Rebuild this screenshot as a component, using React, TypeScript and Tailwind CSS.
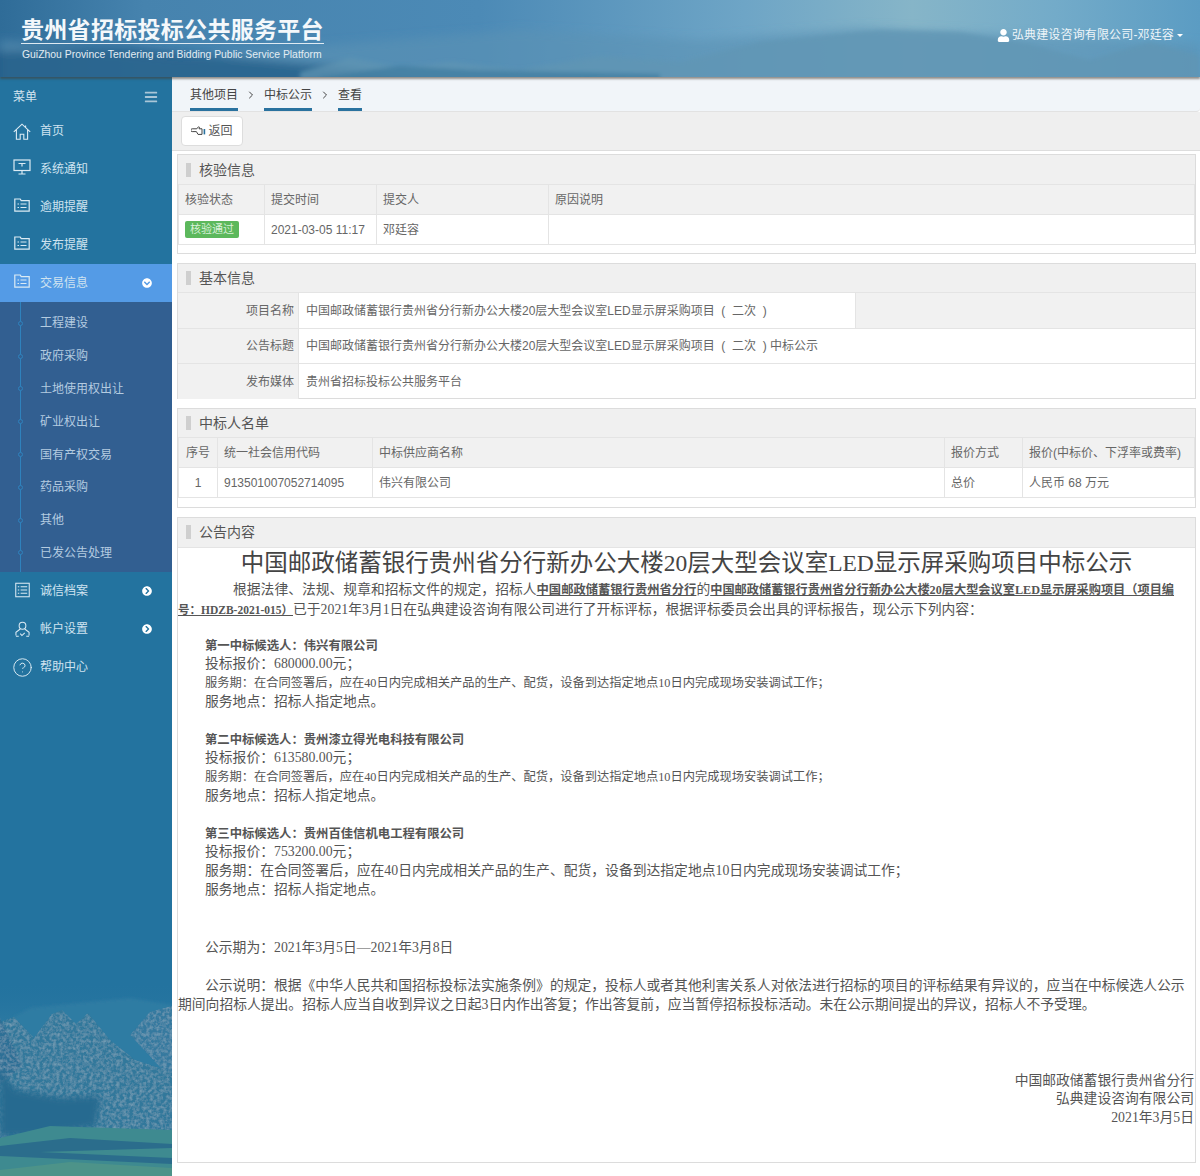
import { ChevronRight, CircleHelp } from "lucide-react";
import { FaBars, FaChevronCircleDown, FaChevronCircleRight, FaUser } from "react-icons/fa";

const sans = "font-['Liberation_Sans','Noto_Sans_CJK_SC',sans-serif]";
const serif = "font-['Liberation_Serif','Noto_Sans_CJK_SC',serif]";

const thClass = "border-r border-[#e4e4e4] px-[6px] text-left font-normal last:border-r-0";
const tdClass = "border-r border-[#e4e4e4] px-[6px] last:border-r-0";
const rowClass = "h-[30px] border-b border-[#e4e4e4]";
const headRowClass = "h-[30px] border-y border-[#e4e4e4] bg-[#f1f1f1]";
const labelClass = "flex w-[121px] shrink-0 items-center justify-end border-r border-[#e4e4e4] bg-[#f1f1f1] pr-[4px]";
const lineClass = "h-[18.8px] whitespace-nowrap";
const smallLine = "text-[12.25px]";
const boldLine = "text-[12.35px] font-bold";
const crumbClass = "flex h-[34px] items-center border-b-[3px] border-[#2a729f] pt-[4px]";

const subMenus = ["工程建设", "政府采购", "土地使用权出让", "矿业权出让", "国有产权交易", "药品采购", "其他", "已发公告处理"];

function HomeIcon() {
  return (
    <svg viewBox="0 0 18 17" className="h-[17px] w-[18px]" fill="none" stroke="currentColor" strokeWidth="1.1">
      <path d="M0.8 8.8 9 1.2l8.2 7.6M3.4 6.8v9.4h3.8v-5h3.6v5h3.8V6.8M12.6 2.6v2" />
    </svg>
  );
}

function ScreenIcon() {
  return (
    <svg viewBox="0 0 18 16" className="-mt-[4px] h-[16px] w-[18px]" fill="none" stroke="currentColor" strokeWidth="1.2">
      <rect x="1" y="1" width="16" height="10.5" />
      <path d="M5.5 4.5h7M9 4.5v3M9 11.5V15M5.5 15h7" />
    </svg>
  );
}

function ListIcon() {
  return (
    <svg viewBox="0 0 16 14" className="-mt-[4px] h-[14px] w-[16px]" fill="none" stroke="currentColor" strokeWidth="1.2">
      <path d="M0.8 13.2V1h5.4l1 1.6h8v10.6z" />
      <path d="M3.5 6h1.5M6.5 6h6M3.5 9.5h1.5M6.5 9.5h6" />
    </svg>
  );
}

function LedgerIcon() {
  return (
    <svg viewBox="0 0 16 16" className="-mt-[3px] h-[16px] w-[15px]" fill="none" stroke="currentColor" strokeWidth="1.1">
      <rect x="0.8" y="0.8" width="14.4" height="14.4" />
      <path d="M3 4.5h1.5M6 4.5h7M3 8h1.5M6 8h7M3 11.5h1.5M6 11.5h7" />
    </svg>
  );
}

function AccountIcon() {
  return (
    <svg viewBox="0 0 16 17" className="h-[17px] w-[15px]" fill="none" stroke="currentColor" strokeWidth="1.1">
      <ellipse cx="8" cy="4.5" rx="3.6" ry="3.8" />
      <path d="M5.6 8 1 11.5V15M10.4 8 15 11.5V15M1 15.8h3M12 15.8h3M5.6 13l1.8 2 3-3" />
    </svg>
  );
}

function BackIcon() {
  return (
    <svg viewBox="0 0 15 11" className="mr-[2px] h-[11px] w-[15px]" fill="none" stroke="#444" strokeWidth="1">
      <path d="M1.2 2.8h4.6L7.4.8l1.2.6-.6 1.4h3v5.6H7L5.4 5.6H1.2a1.4 1.4 0 0 1 0-2.8z" />
      <rect x="12.6" y="3" width="1.6" height="5.4" fill="#2a729f" stroke="none" />
    </svg>
  );
}

function MenuRow({ icon, label, arrow, active }: { icon: React.ReactNode; label: string; arrow?: "down" | "right"; active?: boolean }) {
  return (
    <div className={`flex h-[38px] items-center text-xs text-[#cfe3f0] ${active ? "bg-[#549be6]" : ""}`}>
      <span className="flex w-[40px] shrink-0 justify-center pl-[4px] text-[#dcebf4]">{icon}</span>
      <span className="flex-1">{label}</span>
      {arrow === "down" && <FaChevronCircleDown className="mr-[20px] h-[10px] w-[10px] text-white" />}
      {arrow === "right" && <FaChevronCircleRight className="mr-[20px] h-[10px] w-[10px] text-white" />}
    </div>
  );
}

function PanelTitle({ title, size = "h-[28px]" }: { title: string; size?: string }) {
  return (
    <div className={`flex items-center bg-[#f0f0f0] pl-[8px] text-sm text-[#555] ${size}`}>
      <span className="mr-[8px] h-[14px] w-[5px] bg-[#cfcfcf]" />
      {title}
    </div>
  );
}

function HeaderArt() {
  return (
    <svg viewBox="0 0 1200 77" preserveAspectRatio="none" className="absolute inset-0 h-full w-full">
      <defs>
        <linearGradient id="sky" x1="0" x2="1" y1="0" y2="0">
          <stop offset="0" stopColor="#2f6c98" />
          <stop offset="0.12" stopColor="#4683ae" />
          <stop offset="0.4" stopColor="#4c8ab6" />
          <stop offset="0.62" stopColor="#6ea5c6" />
          <stop offset="0.76" stopColor="#86b5c8" />
          <stop offset="0.88" stopColor="#73abc9" />
          <stop offset="1" stopColor="#5b9cc3" />
        </linearGradient>
        <filter id="soft" x="-5%" y="-40%" width="110%" height="180%">
          <feGaussianBlur stdDeviation="5" />
        </filter>
        <filter id="softer" x="-5%" y="-40%" width="110%" height="180%">
          <feGaussianBlur stdDeviation="2" />
        </filter>
      </defs>
      <rect width="1200" height="77" fill="url(#sky)" />
      <g filter="url(#soft)">
        <path d="M0 40 L180 58 L340 44 L520 30 L700 40 L860 28 L1000 34 L1200 44 V90 H0Z" fill="#5b93b4" opacity="0.6" />
        <path d="M-20 52 L130 48 L330 66 L500 90 H-20Z" fill="#1f5a85" opacity="0.75" />
      </g>
      <g filter="url(#softer)">
        <path d="M300 72 L350 58 L400 68 L450 62 L520 70 L600 56 L680 62 L760 42 L880 30 L960 32 L1030 44 L1090 60 L1150 42 L1200 56 V80 H300Z" fill="#5f95b4" opacity="0.7" />
        <path d="M320 77 L400 66 L470 70 L560 72 L660 74 V80 H320Z" fill="#3f7b9f" opacity="0.7" />
      </g>
    </svg>
  );
}

function SidebarArt() {
  return (
    <svg viewBox="0 0 172 276" preserveAspectRatio="none" className="absolute bottom-0 left-0 h-[276px] w-[172px]">
      <defs>
        <filter id="rock" x="0" y="0" width="100%" height="100%">
          <feTurbulence type="fractalNoise" baseFrequency="0.3" numOctaves="3" seed="4" result="noise" />
          <feColorMatrix in="noise" type="matrix" values="0 0 0 0 0.42  0 0 0 0 0.58  0 0 0 0 0.66  0 0 0 0.7 -0.26" result="speck" />
          <feComposite in="speck" in2="SourceAlpha" operator="in" result="clip" />
          <feMerge>
            <feMergeNode in="SourceGraphic" />
            <feMergeNode in="clip" />
          </feMerge>
        </filter>
        <filter id="haze">
          <feGaussianBlur stdDeviation="1.5" />
        </filter>
        <filter id="edge">
          <feGaussianBlur stdDeviation="3" />
        </filter>
        <linearGradient id="fade" x1="0" x2="0" y1="0" y2="1">
          <stop offset="0" stopColor="#23739f" stopOpacity="0" />
          <stop offset="1" stopColor="#2f7ba3" />
        </linearGradient>
      </defs>
      <rect y="80" width="172" height="50" fill="url(#fade)" />
      <path d="M0 125 L30 108 L70 104 L110 100 L130 98 L172 105 V276 H0Z" fill="#2f7ba3" filter="url(#haze)" />
      <g filter="url(#rock)">
        <path d="M172 106 L150 112 L130 135 L172 180Z" fill="#35799f" />
        <path d="M0 122 L14 117 L34 138 L52 114 L62 110 L76 124 L88 113 L110 140 L135 160 L172 172 V240 H0Z" fill="#32789b" />
        <path d="M0 118 L22 165 L0 185Z" fill="#2e7096" />
      </g>
      <path d="M0 170 L16 190 L60 198 L100 196 L96 226 L40 236 L0 236Z" fill="#256a90" filter="url(#edge)" />
      <path d="M0 238 L50 226 L172 230 V276 H0Z" fill="#3e8a90" />
      <path d="M0 246 L70 238 L172 244 V248 L40 252 L172 258 V264 L0 256Z" fill="#2b6d8c" />
      <path d="M0 270 L70 262 L172 268 V276 H0Z" fill="#4d9389" />
    </svg>
  );
}

export default function App() {
  return (
    <div className={`flex h-[1176px] w-[1200px] flex-col overflow-hidden bg-white text-xs text-[#666] ${sans}`}>
      <header className="relative z-10 h-[77px] shrink-0 shadow-[0_2px_2px_rgba(70,60,50,0.55)]">
        <HeaderArt />
        <div className="relative flex items-start justify-between">
          <div className="ml-[21px] mt-[17px] w-[303px]">
            <div className="h-[27px] whitespace-nowrap border-b border-[#dfeaf2] text-[23px] font-bold leading-[26px] tracking-[0.3px] text-[#f4f8fb]">贵州省招标投标公共服务平台</div>
            <div className="mt-[4px] whitespace-nowrap pl-px text-[10.4px] text-[#e3edf3]">GuiZhou Province Tendering and Bidding Public Service Platform</div>
          </div>
          <div className="mr-[17px] mt-[27px] flex items-center text-xs tracking-[0.15px] text-[#eef5f9]">
            <FaUser className="mr-[2px] h-[13px] w-[13px] text-white" />
            弘典建设咨询有限公司-邓廷容
            <span className="ml-[3px] h-0 w-0 border-x-[3px] border-t-[3px] border-x-transparent border-t-white" />
          </div>
        </div>
      </header>

      <div className="flex min-h-0 flex-1">
        <aside className="relative w-[172px] shrink-0 bg-[#23739f]">
          <SidebarArt />
          <div className="relative">
            <div className="flex h-[35px] items-center justify-between pl-[13px] pr-[14px] pt-[4px] text-xs text-[#d4e5f0]">
              菜单
              <FaBars className="h-[14px] w-[14px] text-[#a9c6d8]" />
            </div>
            <MenuRow icon={<HomeIcon />} label="首页" />
            <MenuRow icon={<ScreenIcon />} label="系统通知" />
            <MenuRow icon={<ListIcon />} label="逾期提醒" />
            <MenuRow icon={<ListIcon />} label="发布提醒" />
            <MenuRow icon={<ListIcon />} label="交易信息" arrow="down" active />
            <div className="relative bg-[#325f91] pb-[3px] pt-[5px]">
              <span className="absolute inset-y-0 left-[20px] w-px bg-[#2f82bd]" />
              {subMenus.map((name) => (
                <div key={name} className="relative flex h-[32.8px] items-center pl-[40px] text-xs text-[#b4cbe0]">
                  <span className="absolute left-[18px] h-[5px] w-[5px] rounded-full border border-[#2f82bd] bg-[#325f91]" />
                  {name}
                </div>
              ))}
            </div>
            <MenuRow icon={<LedgerIcon />} label="诚信档案" arrow="right" />
            <MenuRow icon={<AccountIcon />} label="帐户设置" arrow="right" />
            <MenuRow icon={<CircleHelp className="h-[21px] w-[21px]" strokeWidth={1.1} />} label="帮助中心" />
          </div>
        </aside>

        <main className="flex min-w-0 flex-1 flex-col">
          <div className="flex h-[35px] shrink-0 items-start gap-[7px] rounded-br border-b border-[#e2e2e2] bg-[#f1f5f9] pl-[18px] text-xs text-[#444]">
            <span className={crumbClass}>其他项目</span>
            <ChevronRight className="mt-[12px] h-[12px] w-[12px] text-[#444]" />
            <span className={crumbClass}>中标公示</span>
            <ChevronRight className="mt-[12px] h-[12px] w-[12px] text-[#444]" />
            <span className={crumbClass}>查看</span>
          </div>
          <div className="h-[39px] shrink-0 border-b border-[#ddd] bg-[#efefef] pl-[9px] pt-[4px]">
            <button className="flex h-[30px] w-[62px] items-center justify-center rounded border border-[#ddd] bg-white text-xs text-[#555]">
              <BackIcon />
              返回
            </button>
          </div>

          <div className="flex flex-1 flex-col gap-[9px] pb-[13px] pl-[5px] pr-[4px] pt-[3px]">
            <section className="h-[100px] border border-[#dcdcdc]">
              <PanelTitle title="核验信息" size="h-[29px]" />
              <table className="w-full table-fixed border-collapse border-x border-[#e4e4e4]">
                <thead>
                  <tr className={headRowClass}>
                    <th className={`${thClass} w-[86px]`}>核验状态</th>
                    <th className={`${thClass} w-[112px]`}>提交时间</th>
                    <th className={`${thClass} w-[172px]`}>提交人</th>
                    <th className={thClass}>原因说明</th>
                  </tr>
                </thead>
                <tbody>
                  <tr className={rowClass}>
                    <td className={tdClass}>
                      <span className="inline-block h-[17px] w-[54px] rounded-[2px] bg-[#5cb85c] text-center text-[11px] leading-[17px] text-[#d8f0d8]">核验通过</span>
                    </td>
                    <td className={tdClass}>2021-03-05 11:17</td>
                    <td className={tdClass}>邓廷容</td>
                    <td className={tdClass} />
                  </tr>
                </tbody>
              </table>
            </section>

            <section className="h-[136px] border border-[#dcdcdc]">
              <PanelTitle title="基本信息" />
              <div className="flex h-[36px] border-t border-[#e4e4e4] bg-[#f1f1f1]">
                <div className={labelClass}>项目名称</div>
                <div className="flex w-[557px] items-center whitespace-pre border-r border-[#e4e4e4] bg-white pl-[7px]">中国邮政储蓄银行贵州省分行新办公大楼20层大型会议室LED显示屏采购项目  (  二次  )</div>
              </div>
              <div className="flex h-[35px] border-t border-[#e4e4e4]">
                <div className={labelClass}>公告标题</div>
                <div className="flex flex-1 items-center whitespace-pre pl-[7px]">中国邮政储蓄银行贵州省分行新办公大楼20层大型会议室LED显示屏采购项目  (  二次  ) 中标公示</div>
              </div>
              <div className="flex h-[36px] border-t border-[#e4e4e4]">
                <div className={labelClass}>发布媒体</div>
                <div className="flex flex-1 items-center pl-[7px]">贵州省招标投标公共服务平台</div>
              </div>
            </section>

            <section className="h-[100px] border border-[#dcdcdc]">
              <PanelTitle title="中标人名单" />
              <table className="w-full table-fixed border-collapse border-x border-[#e4e4e4]">
                <thead>
                  <tr className={headRowClass}>
                    <th className={`${thClass} w-[39px] !px-0 !text-center`}>序号</th>
                    <th className={`${thClass} w-[155px]`}>统一社会信用代码</th>
                    <th className={`${thClass} w-[572px]`}>中标供应商名称</th>
                    <th className={`${thClass} w-[78px]`}>报价方式</th>
                    <th className={thClass}>报价(中标价、下浮率或费率)</th>
                  </tr>
                </thead>
                <tbody>
                  <tr className={rowClass}>
                    <td className={`${tdClass} text-center`}>1</td>
                    <td className={tdClass}>913501007052714095</td>
                    <td className={tdClass}>伟兴有限公司</td>
                    <td className={tdClass}>总价</td>
                    <td className={tdClass}>人民币 68 万元</td>
                  </tr>
                </tbody>
              </table>
            </section>

            <section className="flex-1 border border-[#dcdcdc]">
              <PanelTitle title="公告内容" size="h-[29px] pb-[1px]" />
              <div className={`border-t border-[#e4e4e4] text-[13.8px] text-[#555] ${serif}`}>
                <div className="h-[30px] whitespace-nowrap text-center text-[23.5px] leading-[30px] text-[#444]">中国邮政储蓄银行贵州省分行新办公大楼20层大型会议室LED显示屏采购项目中标公示</div>
                <div className={`${lineClass} mt-[3px] pl-[55px] leading-[18.8px]`}>
                  根据法律、法规、规章和招标文件的规定，招标人
                  <span className="text-[12.3px] font-bold underline">中国邮政储蓄银行贵州省分行</span>的
                  <span className="text-[12.2px] font-bold underline">中国邮政储蓄银行贵州省分行新办公大楼20层大型会议室LED显示屏采购项目（项目编</span>
                </div>
                <div className={`${lineClass} mt-[1px] leading-[18.8px]`}>
                  <span className="text-[11.5px] font-bold underline">号：HDZB-2021-015）</span>已于2021年3月1日在弘典建设咨询有限公司进行了开标评标，根据评标委员会出具的评标报告，现公示下列内容：
                </div>

                <div className="mt-[17px] pl-[27px] leading-[18.8px]">
                  <div className={`${lineClass} ${boldLine}`}>第一中标候选人：伟兴有限公司</div>
                  <div className={lineClass}>投标报价：680000.00元；</div>
                  <div className={`${lineClass} ${smallLine}`}>服务期：在合同签署后，应在40日内完成相关产品的生产、配货，设备到达指定地点10日内完成现场安装调试工作；</div>
                  <div className={lineClass}>服务地点：招标人指定地点。</div>

                  <div className={`${lineClass} ${boldLine} mt-[18.8px]`}>第二中标候选人：贵州漆立得光电科技有限公司</div>
                  <div className={lineClass}>投标报价：613580.00元；</div>
                  <div className={`${lineClass} ${smallLine}`}>服务期：在合同签署后，应在40日内完成相关产品的生产、配货，设备到达指定地点10日内完成现场安装调试工作；</div>
                  <div className={lineClass}>服务地点：招标人指定地点。</div>

                  <div className={`${lineClass} ${boldLine} mt-[18.8px]`}>第三中标候选人：贵州百佳信机电工程有限公司</div>
                  <div className={lineClass}>投标报价：753200.00元；</div>
                  <div className={lineClass}>服务期：在合同签署后，应在40日内完成相关产品的生产、配货，设备到达指定地点10日内完成现场安装调试工作；</div>
                  <div className={lineClass}>服务地点：招标人指定地点。</div>

                  <div className={`${lineClass} mt-[39px]`}>公示期为：2021年3月5日—2021年3月8日</div>
                </div>

                <div className="mt-[19.5px] leading-[18.8px]">
                  <div className={`${lineClass} pl-[27px]`}>公示说明：根据《中华人民共和国招标投标法实施条例》的规定，投标人或者其他利害关系人对依法进行招标的项目的评标结果有异议的，应当在中标候选人公示</div>
                  <div className={lineClass}>期间向招标人提出。招标人应当自收到异议之日起3日内作出答复；作出答复前，应当暂停招标投标活动。未在公示期间提出的异议，招标人不予受理。</div>
                </div>

                <div className="mt-[57px] pr-[1px] text-right leading-[18.8px]">
                  <div className={lineClass}>中国邮政储蓄银行贵州省分行</div>
                  <div className={lineClass}>弘典建设咨询有限公司</div>
                  <div className={lineClass}>2021年3月5日</div>
                </div>
              </div>
            </section>
          </div>
        </main>
      </div>
    </div>
  );
}
